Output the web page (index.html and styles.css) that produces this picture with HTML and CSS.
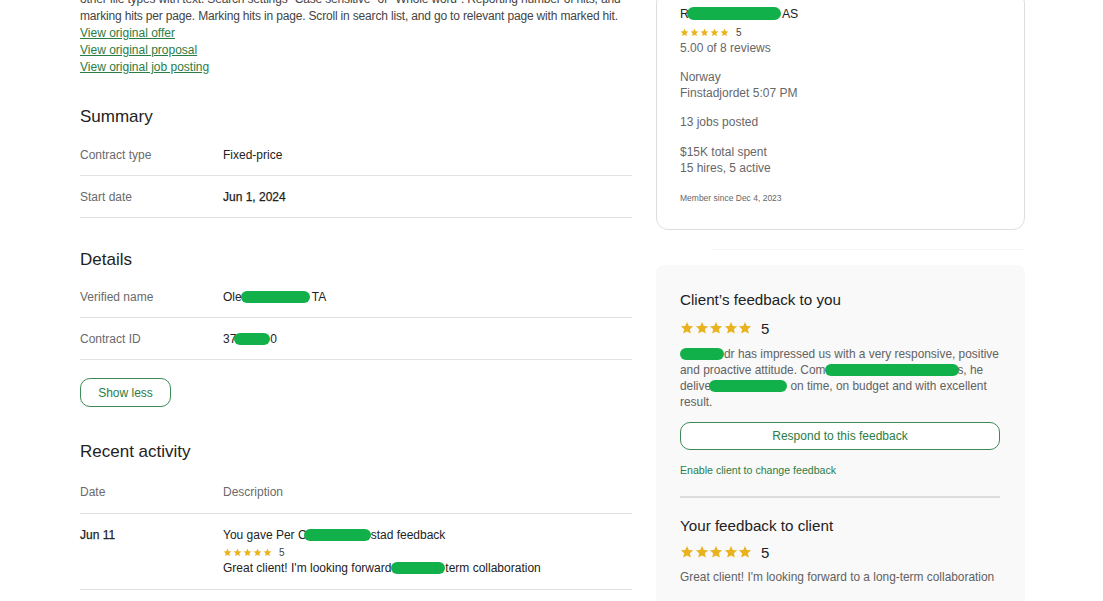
FILE: index.html
```html
<!DOCTYPE html>
<html lang="en">
<head>
<meta charset="utf-8">
<title>Contract</title>
<link rel="stylesheet" href="styles.css">
</head>
<body>
<svg width="0" height="0" class="defs" aria-hidden="true">
  <defs>
    <symbol id="star" viewBox="0 0 24 24">
      <path d="M12 1.5l3.1 6.9 7.4.8-5.6 5 1.6 7.4L12 17.8l-6.5 3.8 1.6-7.4-5.6-5 7.4-.8z"/>
    </symbol>
  </defs>
</svg>
<div class="page">
  <main class="left">
    <p class="desc">other file types with text. Search settings "Case sensitive" or "Whole word". Reporting number of hits, and<br>marking hits per page. Marking hits in page. Scroll in search list, and go to relevant page with marked hit.</p>
    <div class="links">
      <a href="#">View original offer</a>
      <a href="#">View original proposal</a>
      <a href="#">View original job posting</a>
    </div>

    <h2>Summary</h2>
    <div class="row"><span class="label">Contract type</span><span class="value">Fixed-price</span></div>
    <div class="row"><span class="label">Start date</span><span class="value strong">Jun 1, 2024</span></div>

    <h2 class="h-details">Details</h2>
    <div class="row"><span class="label">Verified name</span><span class="value">Ole<span class="redact r-name"></span>TA</span></div>
    <div class="row"><span class="label">Contract ID</span><span class="value">37<span class="redact r-id"></span>0</span></div>

    <button class="btn btn-small" type="button">Show less</button>

    <h2 class="h-activity">Recent activity</h2>
    <div class="row head"><span class="label">Date</span><span class="label">Description</span></div>
    <div class="row activity">
      <span class="value strong">Jun 11</span>
      <div class="act-body">
        <div>You gave Per C<span class="redact r-per"></span>stad feedback</div>
        <div class="stars small"><svg><use href="#star"/></svg><svg><use href="#star"/></svg><svg><use href="#star"/></svg><svg><use href="#star"/></svg><svg><use href="#star"/></svg><span class="num">5</span></div>
        <div>Great client! I'm looking forward<span class="redact r-fw"></span>term collaboration</div>
      </div>
    </div>
  </main>

  <aside class="right">
    <div class="card">
      <div class="c-name">R<span class="redact r-co"></span>AS</div>
      <div class="stars small card-stars"><svg><use href="#star"/></svg><svg><use href="#star"/></svg><svg><use href="#star"/></svg><svg><use href="#star"/></svg><svg><use href="#star"/></svg><span class="num">5</span></div>
      <div class="c-line">5.00 of 8 reviews</div>
      <div class="c-group">
        <div class="c-line">Norway</div>
        <div class="c-line">Finstadjordet 5:07 PM</div>
      </div>
      <div class="c-group">
        <div class="c-line">13 jobs posted</div>
      </div>
      <div class="c-group c-spent">
        <div class="c-line">$15K total spent</div>
        <div class="c-line">15 hires, 5 active</div>
      </div>
      <div class="c-member">Member since Dec 4, 2023</div>
    </div>

    <div class="sep"></div>

    <section class="panel">
      <h3>Client’s feedback to you</h3>
      <div class="stars big"><svg><use href="#star"/></svg><svg><use href="#star"/></svg><svg><use href="#star"/></svg><svg><use href="#star"/></svg><svg><use href="#star"/></svg><span class="num">5</span></div>
      <p class="fb"><span class="redact r-f1"></span>dr has impressed us with a very responsive, positive<br>and proactive attitude. Com<span class="redact r-f2"></span>s, he<br>delive<span class="redact r-f3"></span> on time, on budget and with excellent<br>result.</p>
      <button class="btn btn-wide" type="button">Respond to this feedback</button>
      <a class="enable" href="#">Enable client to change feedback</a>
      <div class="divider"></div>
      <h3 class="h-your">Your feedback to client</h3>
      <div class="stars big"><svg><use href="#star"/></svg><svg><use href="#star"/></svg><svg><use href="#star"/></svg><svg><use href="#star"/></svg><svg><use href="#star"/></svg><span class="num">5</span></div>
      <p class="fb fb-last">Great client! I'm looking forward to a long-term collaboration</p>
    </section>
  </aside>
</div>
</body>
</html>
```

FILE: styles.css
```css
* { box-sizing: border-box; }

html, body {
  margin: 0;
  background: #ffffff;
  overflow: hidden;
}

body {
  font-family: "Liberation Sans", Arial, sans-serif;
  color: #222;
  -webkit-font-smoothing: antialiased;
}

.defs { position: absolute; }

.page {
  display: grid;
  grid-template-columns: 552px 369px;
  column-gap: 24px;
  padding-left: 80px;
  margin-top: -9px;
  align-items: start;
}

/* ---------- left column ---------- */
.desc {
  margin: 0;
  font-size: 12px;
  letter-spacing: -0.17px;
  line-height: 17px;
  color: #444;
  white-space: nowrap;
}

.links {
  display: flex;
  flex-direction: column;
  align-items: flex-start;
}

.links a {
  font-size: 12px;
  line-height: 17px;
  color: #2b7d45;
  text-decoration: underline;
}

h2 {
  margin: 29px 0 5px;
  font-size: 17px;
  font-weight: 400;
  line-height: 24px;
  color: #222;
}

.h-details { margin-top: 30px; margin-bottom: 4px; }

.row {
  display: grid;
  grid-template-columns: 143px 1fr;
  padding: 12px 0 11px;
  font-size: 12px;
  line-height: 18px;
  border-bottom: 1px solid #e2e2e2;
}

.label { color: #6a6a6a; }
.value { color: #222; }
.strong { -webkit-text-stroke: 0.25px #222; }

.btn {
  font-family: inherit;
  background: #fff;
  border: 1px solid #3c8a57;
  color: #2b7d45;
  cursor: pointer;
}

.btn-small {
  margin-top: 18px;
  width: 91px;
  height: 29px;
  border-radius: 10px;
  font-size: 12px;
}

.h-activity { margin-top: 33px; margin-bottom: 7px; }

.row.head { padding-top: 12px; padding-bottom: 12px; }

.row.activity {
  padding: 13px 0 12px;
  line-height: 17px;
}

.act-body { color: #222; }

.stars {
  display: flex;
  align-items: center;
  fill: #e9b320;
}

.stars.small { height: 16px; }
.stars.small svg { width: 9px; height: 9px; margin-right: 1px; }
.stars.small .num { margin-left: 6px; font-size: 10px; color: #444; }

.stars.big { height: 20px; margin-top: 8px; }
.stars.big svg { width: 14px; height: 14px; margin-right: 0.6px; }
.stars.big .num { margin-left: 8px; font-size: 15px; color: #222; }

/* redactions */
.redact {
  display: inline-block;
  height: 12px;
  vertical-align: -2px;
  border-radius: 7px;
  background: #12b04a;
}
.r-name { width: 69px; margin: 0 2px 0 -1px; }
.r-id { width: 36px; margin: 0 0 0 -2px; }
.r-per { width: 67px; margin-left: -3px; }
.r-fw { width: 54px; }
.r-co { width: 94px; margin: 0 1px 0 -2px; height: 13px; }
.r-f1 { width: 44px; margin-right: 0; }
.r-f2 { width: 134px; margin-right: -2px; }
.r-f3 { width: 78px; margin-left: -2px; }

/* ---------- right column ---------- */
.card {
  border: 1px solid #dedede;
  border-radius: 12px;
  padding: 14px 23px 25px;
  font-size: 12px;
  line-height: 16px;
  color: #676767;
}

.c-name { color: #222; font-size: 12.3px; }

.stars.card-stars { height: 18px; padding-top: 3px; }

.c-group { margin-top: 13px; }
.c-spent { margin-top: 14px; }

.c-member {
  margin-top: 16px;
  font-size: 8.5px;
  line-height: 12px;
  color: #676767;
}

.sep {
  margin: 19px 0 0 56px;
  border-top: 1px solid #f4f4f4;
}

.panel {
  margin-top: 15px;
  background: #f9f9f9;
  border-radius: 8px;
  padding: 25px 25px 24px 24px;
  min-height: 360px;
}

h3 {
  margin: 0;
  font-size: 15.2px;
  font-weight: 400;
  line-height: 20px;
  color: #222;
}

.fb {
  margin: 8px 0 0;
  font-size: 11.9px;
  line-height: 16px;
  color: #626262;
}

.btn-wide {
  display: block;
  margin-top: 12px;
  width: 320px;
  height: 28px;
  border-radius: 10px;
  font-size: 12px;
}

.enable {
  display: block;
  margin-top: 13px;
  font-size: 10.6px;
  line-height: 14px;
  color: #2b7d45;
  text-decoration: none;
}

.divider {
  margin-top: 19px;
  width: 320px;
  border-top: 2px solid #dddddd;
}

.h-your { margin-top: 18px; }

.stars.big + .fb-last { margin-top: 7px; }
.h-your + .stars.big { margin-top: 6px; }
```
